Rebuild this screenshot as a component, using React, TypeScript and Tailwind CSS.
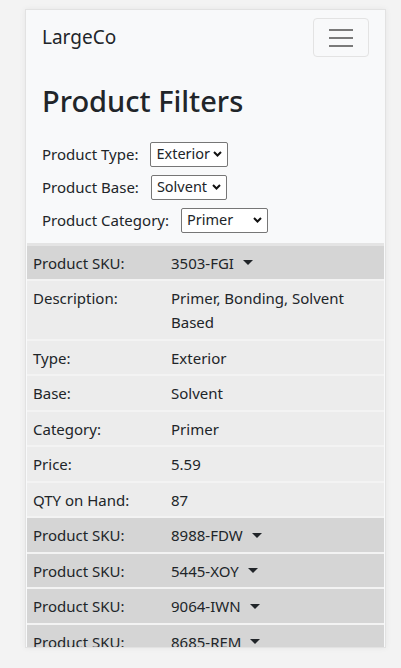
import React from "react";

const details = [
  { label: "Description:", value: "Primer, Bonding, Solvent Based" },
  { label: "Type:", value: "Exterior" },
  { label: "Base:", value: "Solvent" },
  { label: "Category:", value: "Primer" },
  { label: "Price:", value: "5.59" },
  { label: "QTY on Hand:", value: "87" },
];

const otherSkus = ["8988-FDW", "5445-XOY", "9064-IWN", "8685-REM"];

function Caret() {
  return (
    <span className="ml-[9px] inline-block h-0 w-0 border-x-[5px] border-t-[5px] border-x-transparent border-t-[#212529] align-middle" />
  );
}

function Chevron() {
  return (
    <svg width="9" height="6" viewBox="0 0 9 6" className="shrink-0">
      <path d="M1 1l3.5 3.5L8 1" fill="none" stroke="#111" strokeWidth="2" />
    </svg>
  );
}

function Select({ value, width }: { value: string; width: string }) {
  return (
    <div
      className={`flex h-[25px] items-center justify-between rounded-[2px] border border-[#767676] bg-white pl-[5px] pr-[5px] text-[14.5px] ${width}`}
    >
      <span>{value}</span>
      <Chevron />
    </div>
  );
}

function SkuRow({ sku }: { sku: string }) {
  return (
    <div className="grid grid-cols-[138px_1fr] border-b-2 border-[#f3f3f3] bg-[#d5d5d5] py-[4.75px] pl-[6px] leading-6">
      <div>Product SKU:</div>
      <div className="flex items-center">
        {sku}
        <Caret />
      </div>
    </div>
  );
}

export default function App() {
  return (
    <div
      className="h-[668px] w-[401px] overflow-hidden bg-[#f3f3f3] pl-[25px] pt-[9px] text-[#212529]"
      style={{ fontFamily: '"Noto Sans", sans-serif' }}
    >
      <div className="flex h-[639px] w-[361px] flex-col overflow-hidden border border-[#e2e2e2] bg-[#f8f9fa] shadow-[0_0_6px_rgba(0,0,0,0.06)]">
        <nav className="flex items-center justify-between px-4 py-2">
          <span className="text-[19px]">LargeCo</span>
          <button className="flex h-[39px] w-[56px] flex-col items-center justify-center gap-[6px] rounded-[4px] border border-[#e3e3e3]">
            <span className="h-[2px] w-[24px] bg-[#7a7a7a]" />
            <span className="h-[2px] w-[24px] bg-[#7a7a7a]" />
            <span className="h-[2px] w-[24px] bg-[#7a7a7a]" />
          </button>
        </nav>

        <div className="px-4 pb-[10px]">
          <h1 className="mt-[19px] mb-[23px] text-[29px] font-medium leading-[1.2]">Product Filters</h1>
          <div className="flex flex-col gap-2 text-[15px]">
            <div className="flex items-center gap-3">
              <span>Product Type:</span>
              <Select value="Exterior" width="w-[78px]" />
            </div>
            <div className="flex items-center gap-3">
              <span>Product Base:</span>
              <Select value="Solvent" width="w-[76px]" />
            </div>
            <div className="flex items-center gap-3">
              <span>Product Category:</span>
              <Select value="Primer" width="w-[87px]" />
            </div>
          </div>
        </div>

        <div className="mx-px border-t-[3px] border-[#e4e4e4] text-[15px]">
          <SkuRow sku="3503-FGI" />
          {details.map((d) => (
            <div
              key={d.label}
              className="grid grid-cols-[138px_1fr] border-b-2 border-[#f3f3f3] bg-[#ececec] py-[4.75px] pl-[6px] leading-6"
            >
              <div>{d.label}</div>
              <div className="pr-2">{d.value}</div>
            </div>
          ))}
          {otherSkus.map((s) => (
            <SkuRow key={s} sku={s} />
          ))}
        </div>
      </div>
    </div>
  );
}
